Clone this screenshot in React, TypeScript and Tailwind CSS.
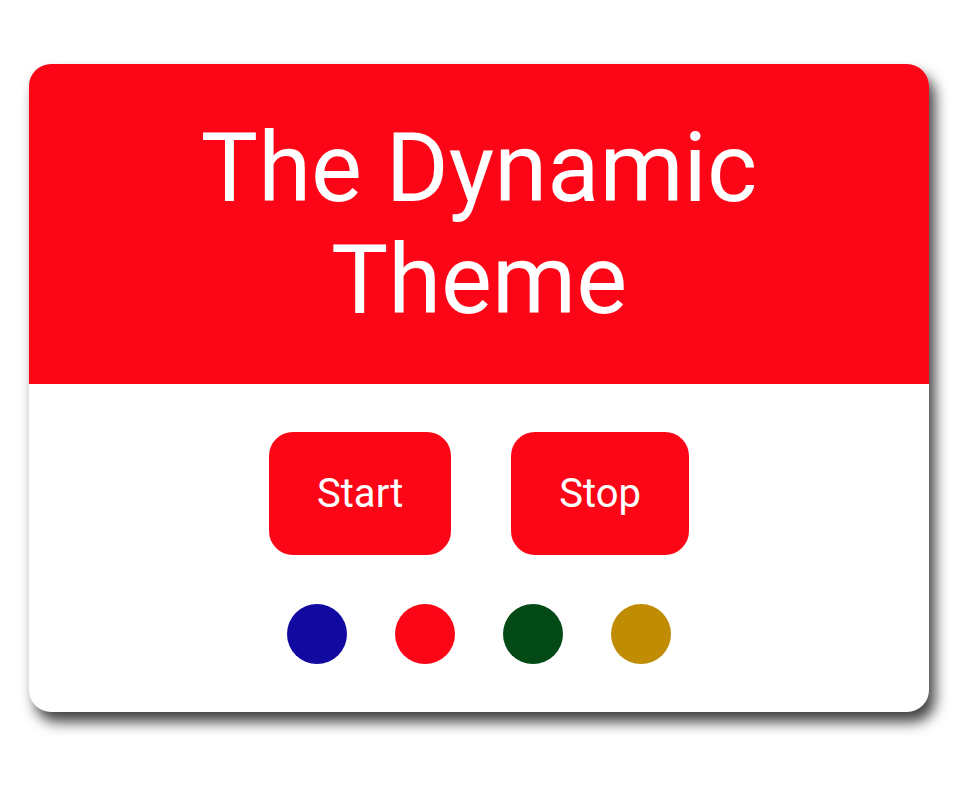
export default function App() {
  const colors = ["#120aa0", "#fc0517", "#034a17", "#c08c04"];
  return (
    <div className="min-h-[812px] w-full bg-white pt-[64px] pl-[29px]" style={{ fontFamily: "Roboto, 'Noto Sans', sans-serif" }}>
      <div className="w-[900px] rounded-[22px] bg-white overflow-hidden shadow-[6px_10px_14px_rgba(0,0,0,0.75)]">
        <div className="h-[320px] bg-[#fc0517] flex items-center justify-center">
          <h1 className="text-white text-[96px] leading-[112px] text-center font-normal w-[640px]">The Dynamic Theme</h1>
        </div>
        <div className="flex flex-col items-center py-[48px] gap-[49px]">
          <div className="flex gap-[60px]">
            <button className="bg-[#fc0517] text-white text-[40px] leading-[47px] px-[48px] py-[38px] rounded-[24px]">Start</button>
            <button className="bg-[#fc0517] text-white text-[40px] leading-[47px] px-[48px] py-[38px] rounded-[24px]">Stop</button>
          </div>
          <div className="flex gap-[48px]">
            {colors.map((c) => (
              <div key={c} className="w-[60px] h-[60px] rounded-full" style={{ backgroundColor: c }} />
            ))}
          </div>
        </div>
      </div>
    </div>
  );
}
